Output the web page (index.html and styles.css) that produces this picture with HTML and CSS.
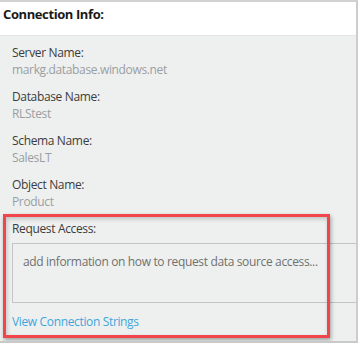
FILE: index.html
```html
<!DOCTYPE html>
<html lang="en">
<head>
    <meta charset="UTF-8">
    <meta name="viewport" content="width=device-width, initial-scale=1.0">
    <title>Connection Info</title>
    <link rel="stylesheet" href="styles.css">
</head>
<body>
    <div class="panel">
        <div class="header">Connection Info:</div>

        <div class="content">
            <div class="field">
                <div class="label">Server Name:</div>
                <div class="value">markg.database.windows.net</div>
            </div>
            <div class="field">
                <div class="label">Database Name:</div>
                <div class="value">RLStest</div>
            </div>
            <div class="field">
                <div class="label">Schema Name:</div>
                <div class="value">SalesLT</div>
            </div>
            <div class="field">
                <div class="label">Object Name:</div>
                <div class="value">Product</div>
            </div>

            <div class="request">
                <div class="label">Request Access:</div>
                <div class="note">add information on how to request data source access...</div>
                <a class="link" href="#">View Connection Strings</a>
                <div class="highlight"></div>
            </div>
        </div>
    </div>
</body>
</html>
```

FILE: styles.css
```css
body { margin: 0; background: #fff; font-family: "Open Sans", "Noto Sans", sans-serif; font-size: 12px; letter-spacing: -0.35px; }
.panel { width: 356px; height: 339px; border-top: 2px solid #d2d2d2; border-right: 2px solid #cdcdcd; border-bottom: 2px solid #c9c9c9; background: #eef0ef; display: flex; flex-direction: column; overflow: hidden; }
.header { background: #fff; height: 33px; line-height: 24px; padding-left: 3px; font-weight: bold; font-size: 13px; color: #1a1a1a; border-bottom: 1px solid #e6e6e6; letter-spacing: -0.4px; }
.content { padding: 8px 0 0 12px; }
.field { margin-bottom: 10px; }
.label { line-height: 17px; color: #3c3c3c; }
.value { line-height: 17px; color: #9a9ea3; }
.request { position: relative; }
.request .label { margin-bottom: 6px; }
.note { margin-right: -4px; border: 1px solid #c3c3c8; padding: 9px 10px; box-sizing: border-box; height: 60px; color: #707070; line-height: 17px; }
.link { display: block; margin-top: 10px; line-height: 17px; color: #3ea6dc; text-decoration: none; }
.highlight { position: absolute; left: -9px; top: -6px; width: 327px; height: 124px; box-sizing: border-box; border: 3px solid #f2444b; box-shadow: 1px 2px 4px rgba(0,0,0,.35), inset 1px 2px 4px rgba(0,0,0,.2); }
```
